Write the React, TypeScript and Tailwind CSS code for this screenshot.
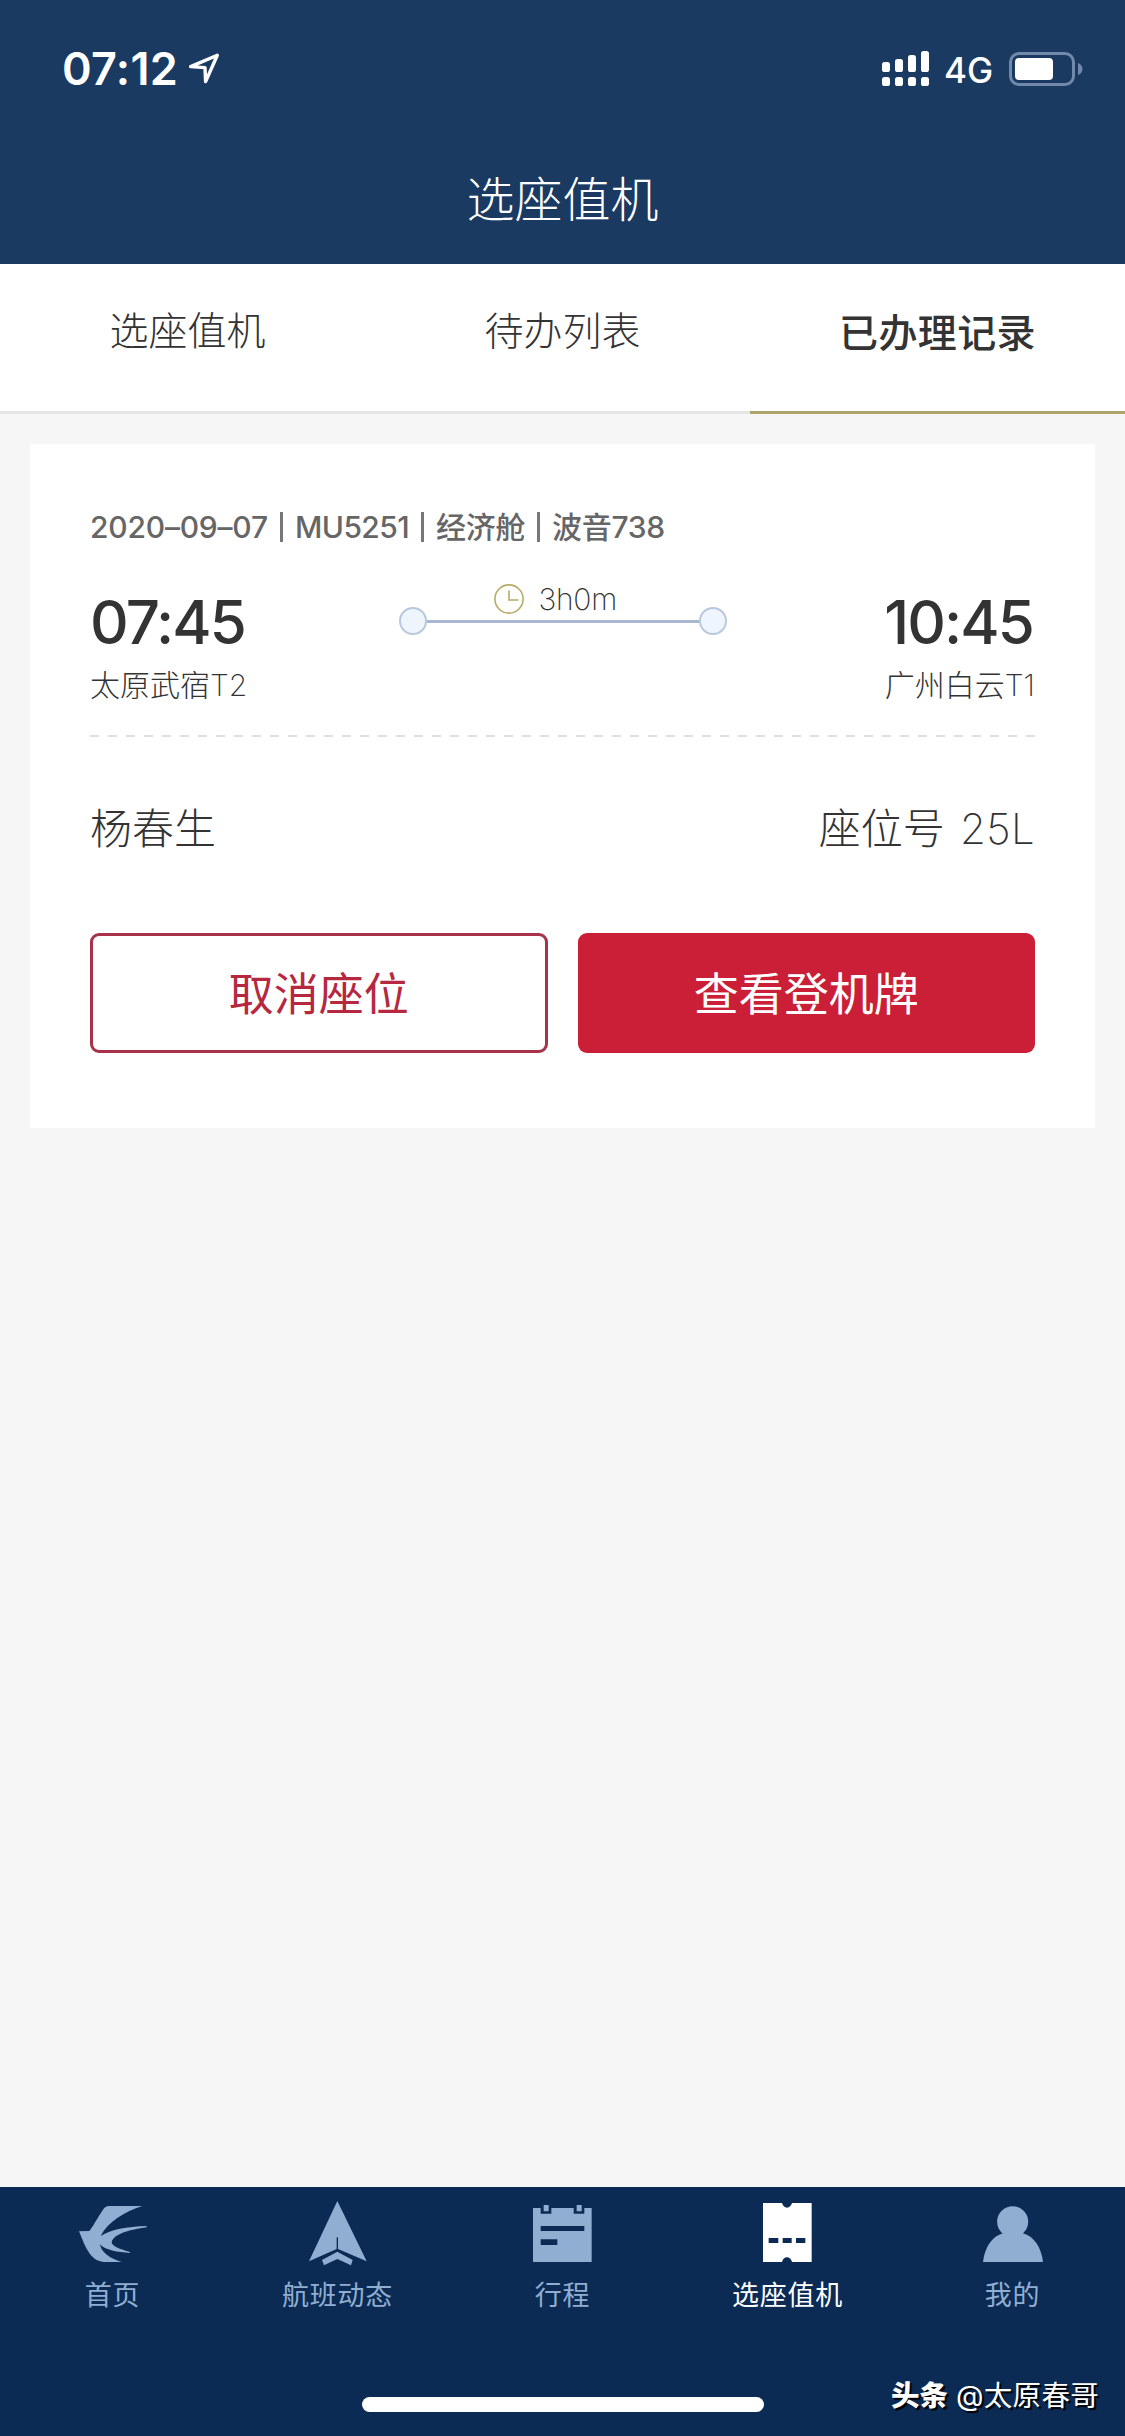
import type { ReactNode } from "react";
import clsx from "clsx";

const tabs = ["选座值机", "待办列表", "已办理记录"];

const flightInfo = [
  { text: "2020–09–07", className: "w-[176px] tracking-[-0.200px]" },
  { text: "MU5251", className: "w-[112px] tracking-[-0.600px]" },
  { text: "经济舱", className: "w-[87px] tracking-[-0.300px]" },
  { text: "波音738", className: "w-[112px] tracking-[-0.300px]" },
];

function LocationArrow() {
  return (
    <svg width="32" height="32" viewBox="0 0 32 32" fill="none">
      <path
        d="M29.3 2.3 2.6 13.6 17 14.6 17.6 28.6Z"
        stroke="#fff"
        strokeWidth="3.400"
        strokeLinejoin="round"
      />
    </svg>
  );
}

function SignalIcon() {
  return (
    <svg width="48" height="36" viewBox="0 0 48 36" fill="#fff">
      <rect x="0" y="11" width="8" height="10" rx="2.6" />
      <rect x="13" y="8" width="8" height="13" rx="2.6" />
      <rect x="26" y="4" width="8" height="17" rx="2.6" />
      <rect x="39" y="0" width="8" height="21" rx="2.6" />
      <rect x="0" y="26" width="8" height="9" rx="2.6" />
      <rect x="13" y="26" width="8" height="9" rx="2.6" />
      <rect x="26" y="26" width="8" height="9" rx="2.6" />
      <rect x="39" y="26" width="8" height="9" rx="2.6" />
    </svg>
  );
}

function BatteryIcon() {
  return (
    <svg width="74" height="34" viewBox="0 0 74 34">
      <rect x="1.5" y="1.5" width="63" height="31" rx="8.5" fill="none" stroke="#7389ac" strokeWidth="3" />
      <rect x="6" y="6" width="38" height="22" rx="4" fill="#fff" />
      <path d="M69 11v12c3-1 4.500-3.500 4.500-6S72 12 69 11Z" fill="#7389ac" />
    </svg>
  );
}

function ClockIcon() {
  return (
    <svg width="30" height="30" viewBox="0 0 30 30" fill="none" stroke="#b7ab66" strokeWidth="1.600">
      <circle cx="15" cy="15" r="14.100" />
      <path d="M15 6.500V16H24.500" />
    </svg>
  );
}

function SwallowIcon() {
  return (
    <svg width="68" height="56" viewBox="238 108 204 168" fill="currentColor">
      <path d="M238 184 269 183C283 165 295 140 310 119Q317 108 328 108H428C375 125 325 155 303 198C335 178 380 170 441 168V172C390 180 345 190 336 216C335 228 362 238 391 246V249C355 247 315 240 301 223C305 248 330 265 366 276H312C270 273 255 225 238 184Z" />
    </svg>
  );
}

function FlightIcon() {
  return (
    <svg className="-mb-[4px]" width="58" height="65" viewBox="928 96 174 195" fill="currentColor">
      <path d="M1013 96 1101 277 1015 240V205H1011V240L928 277Z" />
      <path d="M1013 248 1059 273 1054 289 1013 270 973 289 967 273Z" />
    </svg>
  );
}

function TripIcon() {
  return (
    <svg width="59" height="57" viewBox="337 105 177 171" fill="currentColor">
      <path
        fillRule="evenodd"
        d="M337 114H360V131H392V114H459V131H491V114H513V276H337ZM360 168V183H491V168ZM360 208V225H410V208Z"
      />
      <path d="M369 105H384V124H369ZM468 105H483V124H468Z" />
    </svg>
  );
}

function TicketIcon() {
  return (
    <svg width="49" height="59" viewBox="190 99 147 177" fill="currentColor">
      <path
        fillRule="evenodd"
        d="M190 99H247C249 107 255 113 262 113S275 107 277 99H336V276H277C275 268 269 262 262 262S249 268 247 276H190ZM207 204V219H236V204ZM249 204V219H276V204ZM289 204V219H317V204Z"
      />
    </svg>
  );
}

function PersonIcon() {
  return (
    <svg width="60" height="56" viewBox="852 108 180 168" fill="currentColor">
      <circle cx="941" cy="155" r="46.500" />
      <path d="M852 276C857 232 880 198 912 190H972C1004 198 1027 232 1032 276Z" />
    </svg>
  );
}

const navItems: { label: string; icon: ReactNode; active?: boolean }[] = [
  { label: "首页", icon: <SwallowIcon /> },
  { label: "航班动态", icon: <FlightIcon /> },
  { label: "行程", icon: <TripIcon /> },
  { label: "选座值机", icon: <TicketIcon />, active: true },
  { label: "我的", icon: <PersonIcon /> },
];

function Header() {
  return (
    <header className="h-[264px] bg-[#1a3a62] text-white">
      <div className="flex h-[138px] items-center justify-between pr-[42px] pl-[62px]">
        <div className="flex items-center gap-[9px]">
          <span className="w-[117px] text-[45px] leading-[54px] font-semibold tracking-[0.300px] whitespace-nowrap">
            07:12
          </span>
          <LocationArrow />
        </div>
        <div className="flex items-center">
          <SignalIcon />
          <span className="mt-[2px] ml-[14px] w-[65px] text-[35px] leading-[42px] font-medium whitespace-nowrap">
            4G
          </span>
          <BatteryIcon />
        </div>
      </div>
      <h1 className="mt-[27px] text-center text-[48px] leading-[70px] font-light">
        选座值机
      </h1>
    </header>
  );
}

function Tabs() {
  return (
    <nav className="grid h-[150px] grid-cols-3 bg-white text-center text-[39px]">
      {tabs.map((tab, index) => (
        <div
          key={tab}
          className={clsx(
            "border-b-[3px] leading-[134px]",
            index === 2
              ? "border-[#afa46c] pt-[2px] font-medium tracking-[0.400px]"
              : "border-[#e6e6e6] font-light"
          )}
        >
          {tab}
        </div>
      ))}
    </nav>
  );
}

type AirportProps = {
  time: string;
  name: string;
  terminal: string;
  right?: boolean;
};

function Airport({ time, name, terminal, right }: AirportProps) {
  return (
    <div className={clsx("w-[200px] whitespace-nowrap", right && "text-right")}>
      <p className={clsx("text-[60px] leading-[72px] font-medium tracking-[-1.900px]", right && "pr-[2px]")}>
        {time}
      </p>
      <p className="mt-[5px] text-[30px] leading-[44px] font-light">
        {name}
        <span className="font-extralight">{terminal}</span>
      </p>
    </div>
  );
}

function RecordCard() {
  return (
    <section className="mx-[30px] mt-[30px] h-[684px] bg-white px-[60px] pt-[61px]">
      <div className="flex items-center text-[30px] leading-[44px] font-medium whitespace-nowrap text-[#666]">
        {flightInfo.map((item, index) => (
          <div key={item.text} className="flex items-center">
            {index > 0 && <span className="mr-[12px] ml-[14px] h-[30px] w-[3px] bg-[#777]" />}
            <span className={item.className}>{item.text}</span>
          </div>
        ))}
      </div>

      <div className="mt-[37px] flex justify-between">
        <Airport time="07:45" name="太原武宿" terminal="T2" />
        <div className="w-[328px]">
          <div className="-mt-[5px] flex h-[36px] items-center gap-[15px] pl-[95px] text-[30px] leading-[36px] font-extralight tracking-[-0.300px]">
            <ClockIcon />
            3h0m
          </div>
          <div className="-mt-[10px] flex items-center">
            <span className="size-[28px] rounded-full border-2 border-[#b9c8dd] bg-[#eff5fd]" />
            <span className="h-[3px] flex-1 bg-[#a9b8d1]" />
            <span className="size-[28px] rounded-full border-2 border-[#b9c8dd] bg-[#eff5fd]" />
          </div>
        </div>
        <Airport time="10:45" name="广州白云" terminal="T1" right />
      </div>

      <div className="mt-[28px] h-[2px] bg-[repeating-linear-gradient(90deg,#e0e0e0_0_9px,transparent_9px_18px)]" />

      <div className="mt-[61px] flex justify-between text-[42px] leading-[62px] font-light">
        <span>杨春生</span>
        <span>
          座位号<span className="ml-[3px] font-extralight tracking-[0.400px]"> 25L</span>
        </span>
      </div>

      <div className="mt-[73px] grid grid-cols-2 gap-[30px] text-[45px]">
        <button className="h-[120px] rounded-[9px] border-[3px] border-[#a8324a] pt-[4px] leading-[110px] text-[#b5283f]">
          取消座位
        </button>
        <button className="h-[120px] rounded-[9px] bg-[#ca1f36] pt-[4px] leading-[116px] text-white">
          查看登机牌
        </button>
      </div>
    </section>
  );
}

function BottomNav() {
  return (
    <footer className="relative flex h-[249px] flex-col bg-[#0b2b55]">
      <div className="grid grid-cols-5">
        {navItems.map((item) => (
          <div
            key={item.label}
            className={clsx(
              "flex flex-col items-center",
              item.active ? "text-white" : "text-[#90aed2]"
            )}
          >
            <div className="flex h-[80px] items-end pb-[5px]">{item.icon}</div>
            <span className="mt-[9px] text-[27px] leading-[40px] tracking-[0.800px]">
              {item.label}
            </span>
          </div>
        ))}
      </div>
      <div className="mx-auto mt-[81px] h-[15px] w-[402px] rounded-full bg-white" />
      <div className="absolute right-[26px] bottom-[19px] flex items-center gap-[8px] text-[28.500px] leading-[42px] text-white [text-shadow:2px_2px_1px_#000]">
        <b className="font-black">头条</b>
        <span className="tracking-[0.300px]">@太原春哥</span>
      </div>
    </footer>
  );
}

export default function App() {
  return (
    <main className="flex h-[2436px] w-[1125px] flex-col overflow-hidden bg-[#f6f6f6] font-[Inter,'Noto_Sans_CJK_SC',sans-serif] text-[#333]">
      <Header />
      <Tabs />
      <RecordCard />
      <div className="flex-1" />
      <BottomNav />
    </main>
  );
}
